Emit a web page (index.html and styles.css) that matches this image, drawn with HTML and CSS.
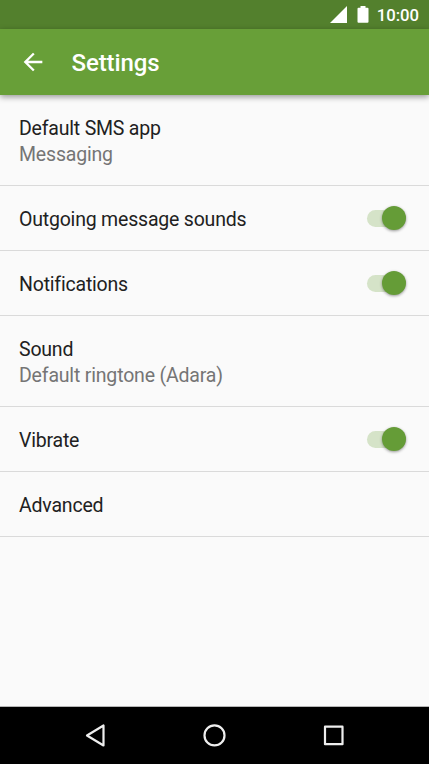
FILE: index.html
```html
<!DOCTYPE html>
<html lang="en">
<head>
<meta charset="utf-8">
<title>Settings</title>
<link rel="stylesheet" href="styles.css">
</head>
<body>
<div class="screen">
  <div class="status">
    <svg class="signal" width="17" height="17" viewBox="0 0 17 17"><path d="M17 0V17H0Z" fill="#fff"/></svg>
    <svg class="battery" width="12" height="17" viewBox="0 0 12 17"><path d="M3.500 0h5v1.800H10.500q1 0 1 1v13q0 1-1 1h-9q-1 0-1-1v-13q0-1 1-1h2z" fill="#fff"/></svg>
    <span class="clock">10:00</span>
  </div>
  <header class="appbar">
    <svg class="back" width="28" height="28" viewBox="0 0 24 24"><path d="M20 11H7.830l5.590-5.590L12 4l-8 8 8 8 1.410-1.410L7.830 13H20z" fill="#fff"/></svg>
    <h1>Settings</h1>
  </header>
  <main class="list">
    <div class="row tall"><div class="title">Default SMS app</div><div class="sub">Messaging</div></div>
    <div class="row"><div class="title">Outgoing message sounds</div><span class="switch"></span></div>
    <div class="row"><div class="title">Notifications</div><span class="switch"></span></div>
    <div class="row tall ringtone"><div class="title">Sound</div><div class="sub">Default ringtone (Adara)</div></div>
    <div class="row"><div class="title">Vibrate</div><span class="switch"></span></div>
    <div class="row"><div class="title">Advanced</div></div>
  </main>
  <nav class="nav">
    <svg width="429" height="57" viewBox="0 0 429 57" fill="none" stroke="#eee" stroke-width="2.200"><path d="M103.500 18.500V38.500L87 28.500Z" stroke-linejoin="round"/><circle cx="214.500" cy="28.400" r="10"/><rect x="325" y="19.700" width="17.500" height="17.500" stroke-linejoin="round"/></svg>
  </nav>
</div>
</body>
</html>
```
FILE: styles.css
```css
* { box-sizing: border-box; }
body { margin: 0; font-family: Roboto, sans-serif; }
.screen { width: 429px; height: 764px; display: flex; flex-direction: column; background: #fafafa; overflow: hidden; }
.status { height: 29px; flex: none; background: #53802d; display: flex; align-items: center; justify-content: flex-end; padding-right: 10px; color: #fff; }
.battery { margin: 0 8px 0 10px; }
.clock { font-size: 16.700px; font-weight: 500; line-height: 29px; padding-top: 1px; }
.appbar { height: 66.400px; flex: none; background: #689f38; display: flex; align-items: center; padding-left: 19px; color: #fff; box-shadow: 0 2px 6px rgba(0,0,0,.4); z-index: 1; }
.back { margin-top: -1px; }
.appbar h1 { margin: 2px 0 0 24.500px; font-size: 24px; font-weight: 500; line-height: 28px; letter-spacing: -.1px; }
.list { flex: 1; margin-top: -.4px; padding-top: 1px; border-bottom: 1px solid #b5b5b5; }
.row { height: 65px; border-bottom: 1px solid #dadada; padding: 0 23px 0 19px; display: flex; align-items: center; justify-content: space-between; }
.row.tall { height: 90px; flex-direction: column; align-items: flex-start; justify-content: flex-start; padding-top: 20px; }
.row.ringtone { height: 91px; padding-top: 21px; }
.title { font-size: 19.500px; line-height: 26px; letter-spacing: -.2px; color: #212121; }
.row:not(.tall) .title { padding-top: 3px; }
.sub { font-size: 19.500px; line-height: 26px; letter-spacing: -.18px; color: #757575; }
.switch { width: 39px; height: 17px; border-radius: 9px; background: #d5e3c8; display: flex; align-items: center; justify-content: flex-end; }
.switch::after { content: ""; width: 24px; height: 24px; flex: none; border-radius: 50%; background: #659c37; box-shadow: 0 1px 3px rgba(0,0,0,.4); }
.nav { height: 57px; flex: none; background: #000; }
.nav svg { display: block; }
```
